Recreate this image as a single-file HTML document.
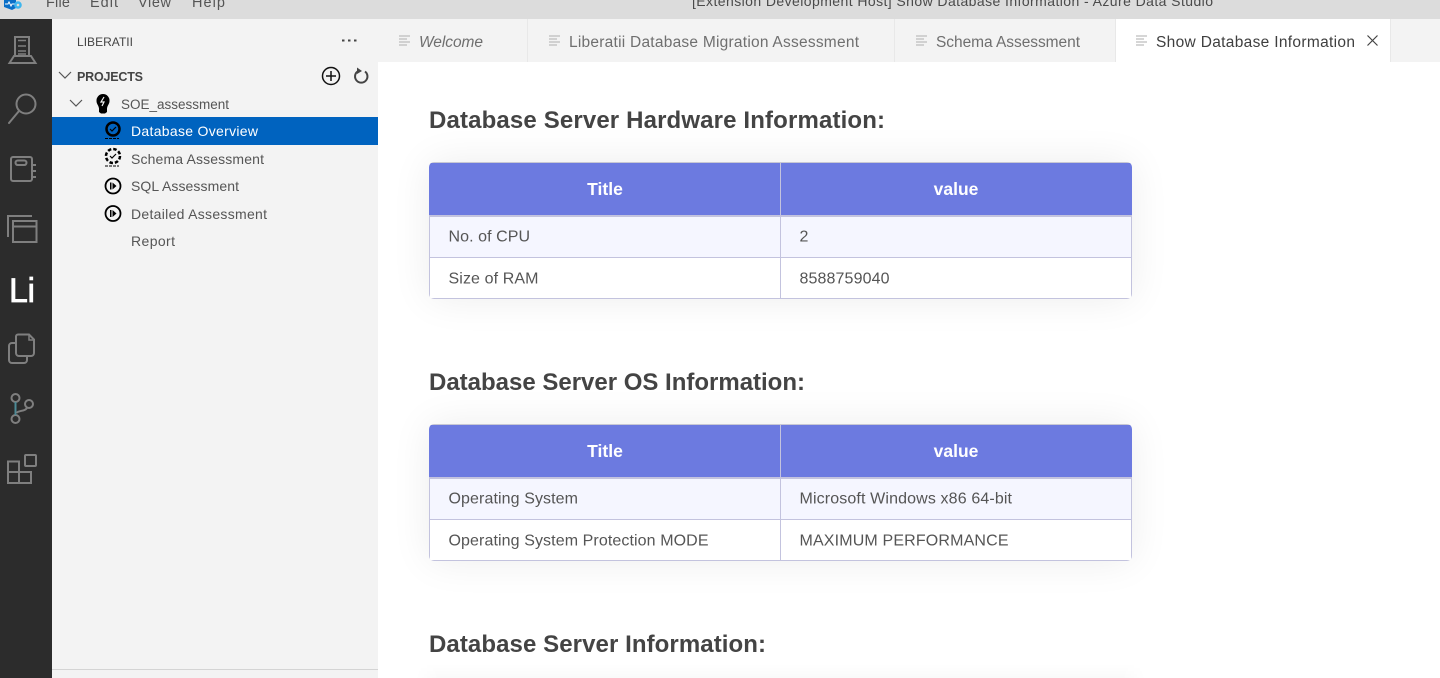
<!DOCTYPE html>
<html lang="en"><head><meta charset="utf-8"><title>Show Database Information - Azure Data Studio</title>
<style>
html,body{margin:0;padding:0;width:1440px;height:678px;overflow:hidden;background:#fff}
#root{position:relative;width:1440px;height:678px;overflow:hidden;background:#fff}
.b{position:absolute}
.tbl{position:absolute;left:429px;width:703px;height:137px;border-radius:5px;background:#fff;box-shadow:0 0 40px rgba(0,0,0,.075);overflow:hidden}
.tbl i{position:absolute;display:block}
.t{left:0;top:0;right:0;height:1.500px;background:#c8c8d4}
.h{left:0;top:1px;right:0;height:52px;background:#6c7ae0}
.s{left:0;top:53px;right:0;height:2px;background:#c3c3de}
.r{left:0;top:55px;right:0;height:40px;background:#f5f6ff}
.l{left:0;top:95px;right:0;height:1px;background:#c3c3de}
.e{left:0;top:53px;width:1px;bottom:0;background:#c3c3de}
.g{right:0;top:53px;width:1px;bottom:0;background:#c3c3de}
.f{left:0;right:0;bottom:0;height:1px;background:#c3c3de}
.c{left:351px;top:1px;width:1px;bottom:0;background:#c3c3de}
svg{position:absolute;left:0;top:0}
text{font-family:"Liberation Sans",sans-serif}
</style></head><body>
<div id="root">
<div class="b" style="left:0;top:0;width:1440px;height:19px;background:#dcdcdc"></div>
<div class="b" style="left:0;top:19px;width:52px;height:659px;background:#2c2c2c"></div>
<div class="b" style="left:52px;top:19px;width:326px;height:659px;background:#f3f3f3"></div>
<div class="b" style="left:52px;top:669px;width:326px;height:1px;background:#d4d4d4"></div>
<div class="b" style="left:378px;top:19px;width:1062px;height:43px;background:#f3f3f3"></div>
<div class="b" style="left:527px;top:19px;width:1px;height:43px;background:#e8e8e8"></div>
<div class="b" style="left:894px;top:19px;width:1px;height:43px;background:#e8e8e8"></div>
<div class="b" style="left:1115px;top:19px;width:1px;height:43px;background:#e8e8e8"></div>
<div class="b" style="left:1116px;top:19px;width:274px;height:43px;background:#fff"></div>
<div class="b" style="left:1390px;top:19px;width:1px;height:43px;background:#e8e8e8"></div>
<div class="b" style="left:52px;top:117px;width:326px;height:28px;background:#0063bf"></div>

<div class="tbl" style="top:162px"><i class="t"></i><i class="h"></i><i class="s"></i><i class="r"></i><i class="l"></i><i class="e"></i><i class="g"></i><i class="f"></i><i class="c"></i></div>
<div class="tbl" style="top:424px"><i class="t"></i><i class="h"></i><i class="s"></i><i class="r"></i><i class="l"></i><i class="e"></i><i class="g"></i><i class="f"></i><i class="c"></i></div>
<div class="b" style="left:415px;top:664px;width:731px;height:14px;background:linear-gradient(to bottom,rgba(0,0,0,0),rgba(0,0,0,.02));-webkit-mask-image:linear-gradient(to right,transparent,#000 24px,#000 707px,transparent);mask-image:linear-gradient(to right,transparent,#000 24px,#000 707px,transparent)"></div>

<svg width="1440" height="678" viewBox="0 0 1440 678" xmlns="http://www.w3.org/2000/svg">
<!-- app logo -->
<path d="M4 0h12v8l-4 2-8-3z" fill="#0a6fc8"/><path d="M5 4l3 0 1-2 2 4 1-2h3" stroke="#fff" stroke-width="1" fill="none"/><circle cx="18" cy="5" r="3.800" fill="#3fb6ee"/><circle cx="18" cy="5" r="1.300" fill="#dcdcdc"/>
<!-- menu -->
<g font-size="14.500" fill="#555">
<text x="46" y="7" textLength="24">File</text><text x="90" y="7" textLength="28">Edit</text><text x="138" y="7" textLength="33">View</text><text x="192" y="7" textLength="33">Help</text>
<text x="692" y="6" textLength="521" font-size="14" fill="#4a4a4a">[Extension Development Host] Show Database Information - Azure Data Studio</text>
</g>
<!-- activity bar icons -->
<g fill="none" stroke="#7f7f7f" stroke-width="2">
<path d="M15 55V37h14v18"/><path d="M18 40.500h8M18 46h8M18 51h8M18 54h8" stroke-width="1.600"/><path d="M14 56l-4.500 7h26L31 56H14z"/>
<circle cx="26" cy="104" r="9.500"/><path d="M19 111l-10 12" stroke-linecap="round"/>
<rect x="11" y="157" width="21" height="24" rx="2"/><rect x="15.500" y="160.500" width="11" height="4.500" rx="2.200"/><path d="M33 165h3M33 171h3M33 177h3" stroke-width="2"/>
<path d="M32 216H8v21"/><rect x="13" y="221" width="23.500" height="21"/><path d="M13 226.500h23.500"/>
<path d="M18 334.500h11l5 5V353a3 3 0 0 1-3 3H19a3 3 0 0 1-3-3V336.500a2 2 0 0 1 2-2z"/><path d="M29 335v5h5" stroke-width="1.500"/><path d="M16 343h-4a3 3 0 0 0-3 3v14a3 3 0 0 0 3 3h12a3 3 0 0 0 3-3v-4"/>
<circle cx="15.500" cy="398" r="4"/><circle cx="15.500" cy="419" r="4"/><circle cx="29" cy="404" r="4"/><path d="M15.500 402v13" stroke="#4d8a96"/><path d="M16.500 413c2-3 9-1 11-6"/>
<rect x="25" y="455" width="11" height="11" rx="1"/><path d="M8 461.500h11v10.500h12v11H8zM8 472h11v11"/>
</g>
<text x="9" y="302" font-size="34" fill="#fff" stroke="#fff" stroke-width=".7" textLength="26">Li</text>
<!-- sidebar -->
<text x="77" y="46" font-size="12" fill="#444" textLength="56">LIBERATII</text>
<g fill="#444"><rect x="342" y="39.500" width="2.500" height="2"/><rect x="348" y="39.500" width="2.500" height="2"/><rect x="354" y="39.500" width="2.500" height="2"/></g>
<path d="M59 72l6 6 6-6" fill="none" stroke="#555" stroke-width="1.200"/>
<text x="77" y="81" font-size="12.500" font-weight="700" fill="#444" textLength="66">PROJECTS</text>
<circle cx="331" cy="76" r="8.500" fill="none" stroke="#111" stroke-width="1.500"/><path d="M326 76h10M331 71v10" stroke="#111" stroke-width="1.500"/>
<path d="M365 71.500a6.200 6.200 0 1 1-7.500 0" fill="none" stroke="#444" stroke-width="2"/><path d="M357 67.500l5 3.500-5 3z" fill="#444"/>
<path d="M70 100l6 6 6-6" fill="none" stroke="#555" stroke-width="1.200"/>
<path d="M103 94a6.500 6.500 0 0 1 6.500 7c0 3-2 4-2.500 7.500v3.500l-2 1.500h-4l-2-1.500v-3.500c-.5-3.500-2.500-4.500-2.500-7.500a6.500 6.500 0 0 1 6.500-7z" fill="#000"/><path d="M104 97l-3 5h3l-2 4" stroke="#f3f3f3" stroke-width="1.200" fill="none"/>
<g font-size="14" fill="#555">
<text x="121" y="109" font-size="13.500" textLength="108">SOE_assessment</text>
<text x="131" y="136" textLength="127" fill="#fff">Database Overview</text>
<text x="131" y="164" textLength="133">Schema Assessment</text>
<text x="131" y="191" textLength="108">SQL Assessment</text>
<text x="131" y="219" textLength="136">Detailed Assessment</text>
<text x="131" y="246" textLength="44">Report</text>
</g>
<circle cx="113" cy="129" r="6.500" fill="none" stroke="#000" stroke-width="2.500"/><path d="M110 129l2 2 4-4" stroke="#000" stroke-width="1.200" fill="none"/><path d="M105 138.500h14" stroke="#000" stroke-width="1" stroke-dasharray="3 1"/>
<circle cx="113" cy="156" r="7" fill="none" stroke="#000" stroke-width="2.500" stroke-dasharray="3.500 2"/><path d="M110 156l2 2 4-4" stroke="#000" stroke-width="1.200" fill="none"/><path d="M105 166h14" stroke="#000" stroke-width="1" stroke-dasharray="3 1"/>
<circle cx="113" cy="186" r="7.500" fill="none" stroke="#000" stroke-width="1.800"/><path d="M110 182.500h1.500v7H110zM112.500 182.500l4 3.500-4 3.500z" fill="#000"/>
<circle cx="113" cy="213.500" r="7.500" fill="none" stroke="#000" stroke-width="1.800"/><path d="M110 210h1.500v7H110zM112.500 210l4 3.500-4 3.500z" fill="#000"/>
<!-- tabs -->
<g stroke="#bdbdbd" stroke-width="1.300">
<path d="M399 36h11M399 39h8M399 42h11M399 45h8"/>
<path d="M549 36h11M549 39h8M549 42h11M549 45h8"/>
<path d="M916 36h11M916 39h8M916 42h11M916 45h8"/>
<path d="M1136 36h11M1136 39h8M1136 42h11M1136 45h8"/>
</g>
<g font-size="15.500" fill="#6f6f6f">
<text x="419" y="47" font-style="italic" textLength="64">Welcome</text>
<text x="569" y="47" textLength="290">Liberatii Database Migration Assessment</text>
<text x="936" y="47" textLength="144">Schema Assessment</text>
<text x="1156" y="47" textLength="199" fill="#3f3f3f">Show Database Information</text>
</g>
<path d="M1367.500 35.500l10 10M1377.500 35.500l-10 10" stroke="#444" stroke-width="1.200"/>
<!-- headings -->
<g font-size="24" font-weight="700" fill="#444">
<text x="429" y="128" textLength="456">Database Server Hardware Information:</text>
<text x="429" y="390" textLength="376">Database Server OS Information:</text>
<text x="429" y="652" textLength="337">Database Server Information:</text>
</g>
<!-- table text -->
<g font-size="17.500" font-weight="700" fill="#fff">
<text x="605" y="195" text-anchor="middle">Title</text><text x="956" y="195" text-anchor="middle">value</text>
<text x="605" y="457" text-anchor="middle">Title</text><text x="956" y="457" text-anchor="middle">value</text>
</g>
<g font-size="16" fill="#555">
<text x="448.500" y="241.500" textLength="81.500">No. of CPU</text><text x="799.500" y="241.500">2</text>
<text x="448.500" y="283.500" textLength="90">Size of RAM</text><text x="799.500" y="283.500" textLength="90">8588759040</text>
<text x="448.500" y="503.500" textLength="129.500">Operating System</text><text x="799.500" y="503.500" textLength="212.500">Microsoft Windows x86 64-bit</text>
<text x="448.500" y="545.500" textLength="260">Operating System Protection MODE</text><text x="799.500" y="545.500" textLength="209">MAXIMUM PERFORMANCE</text>
</g>
</svg>
</div>
</body></html>
